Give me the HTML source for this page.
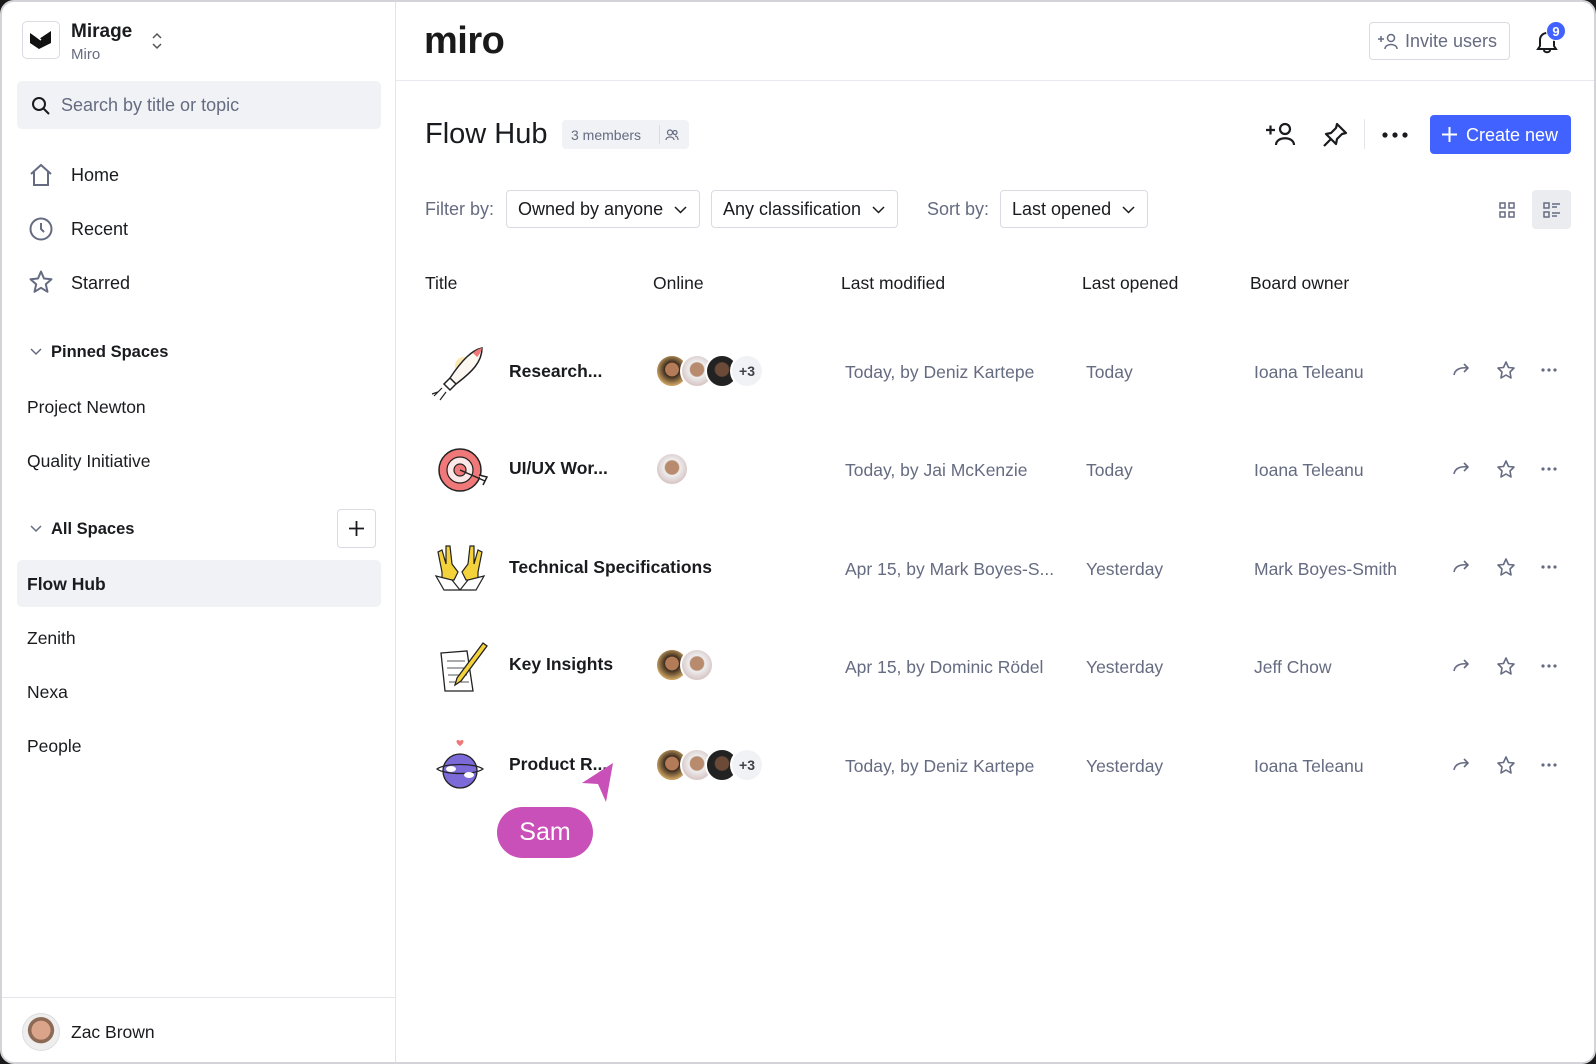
<!DOCTYPE html>
<html><head><meta charset="utf-8"><style>
*{box-sizing:border-box;margin:0;padding:0}
body{width:1596px;height:1064px;background:#1a1a1a;font-family:"Liberation Sans",sans-serif;color:#1a1b1f;overflow:hidden;position:relative}
.card{position:absolute;left:0;top:0;width:1596px;height:1064px;background:#fff;border:2px solid #d4d4d8;border-radius:14px;overflow:hidden}
.a{position:absolute;white-space:nowrap}
.side{position:absolute;left:0;top:0;width:394px;height:1064px;border-right:1.5px solid #e4e5ea}
.nav{font-size:18px;color:#1a1b1f}
.gray{color:#656b81}
.sec{font-weight:bold;font-size:16.5px}
.dd{position:absolute;top:188px;height:38px;border:1.5px solid #d9dbe3;border-radius:4px;font-size:18px;padding:8px 11px;white-space:nowrap}
.col{font-size:17.5px;top:271px}
.row .t{font-weight:bold;font-size:17.5px}
.cell{font-size:17.5px;color:#656b81}
.av{position:absolute;width:34px;height:34px;border-radius:50%;border:2px solid #fff}
.plus{background:#f1f2f5;color:#40424a;font-size:14px;text-align:center;line-height:30px;font-weight:bold}
svg{position:absolute;overflow:visible}
</style></head><body><div class="card">

<div class="side">
 <div class="a" style="left:20px;top:19px;width:38px;height:38px;border:1.5px solid #d9dbe3;border-radius:5px"></div>
 <svg style="left:27px;top:28px" width="24" height="20" viewBox="0 0 24 20"><path d="M1 3 L10 9 L10 19 L1 13Z M10 9 L22 1 L22 13 L10 19Z" fill="#111"/><path d="M4 4 L12 10" stroke="#fff" stroke-width="1.5"/></svg>
 <div class="a" style="left:69px;top:19px;font-size:19px;font-weight:bold">Mirage</div>
 <div class="a gray" style="left:69px;top:44px;font-size:15px">Miro</div>
 <svg style="left:150px;top:31px" width="10" height="16"><path d="M1 5 L5 1 L9 5 M1 11 L5 15 L9 11" stroke="#555" stroke-width="1.5" fill="none"/></svg>
 <div class="a" style="left:15px;top:79px;width:364px;height:48px;background:#f1f2f5;border-radius:5px"></div>
 <svg style="left:29px;top:94px" width="20" height="20"><circle cx="8" cy="8" r="6" stroke="#1a1b1f" stroke-width="2" fill="none"/><path d="M12.5 12.5 L18 18" stroke="#1a1b1f" stroke-width="2"/></svg>
 <div class="a gray" style="left:59px;top:93px;font-size:18px">Search by title or topic</div>

 <svg style="left:27px;top:161px" width="24" height="24"><path d="M2 11 L12 2 L22 11 M5 9 V22 H19 V9" stroke="#656b81" stroke-width="2" fill="none"/></svg>
 <div class="a nav" style="left:69px;top:163px">Home</div>
 <svg style="left:27px;top:215px" width="24" height="24"><circle cx="12" cy="12" r="10.5" stroke="#656b81" stroke-width="2" fill="none"/><path d="M12 6 V12 L15 15" stroke="#656b81" stroke-width="2" fill="none"/></svg>
 <div class="a nav" style="left:69px;top:217px">Recent</div>
 <svg style="left:27px;top:268px" width="24" height="24"><path d="M12 1.5 L15 8.5 L22.5 9.2 L16.8 14.2 L18.5 21.8 L12 17.8 L5.5 21.8 L7.2 14.2 L1.5 9.2 L9 8.5Z" stroke="#656b81" stroke-width="2" fill="none" stroke-linejoin="round"/></svg>
 <div class="a nav" style="left:69px;top:271px">Starred</div>

 <svg style="left:28px;top:346px" width="12" height="8"><path d="M1 1 L6 6 L11 1" stroke="#656b81" stroke-width="1.5" fill="none"/></svg>
 <div class="a sec" style="left:49px;top:341px">Pinned Spaces</div>
 <div class="a nav" style="left:25px;top:395px;font-size:17.5px">Project Newton</div>
 <div class="a nav" style="left:25px;top:449px;font-size:17.5px">Quality Initiative</div>
 <svg style="left:28px;top:523px" width="12" height="8"><path d="M1 1 L6 6 L11 1" stroke="#656b81" stroke-width="1.5" fill="none"/></svg>
 <div class="a sec" style="left:49px;top:518px">All Spaces</div>
 <div class="a" style="left:335px;top:507px;width:39px;height:39px;border:1.5px solid #d9dbe3;border-radius:4px"></div>
 <svg style="left:347px;top:519px" width="15" height="15"><path d="M7.5 0 V15 M0 7.5 H15" stroke="#1a1b1f" stroke-width="1.8"/></svg>
 <div class="a" style="left:15px;top:558px;width:364px;height:47px;background:#f1f2f5;border-radius:5px"></div>
 <div class="a" style="left:25px;top:572px;font-size:17.5px;font-weight:bold">Flow Hub</div>
 <div class="a nav" style="left:25px;top:626px;font-size:17.5px">Zenith</div>
 <div class="a nav" style="left:25px;top:680px;font-size:17.5px">Nexa</div>
 <div class="a nav" style="left:25px;top:734px;font-size:17.5px">People</div>
 <div class="a" style="left:0;top:995px;width:394px;border-top:1.5px solid #e4e5ea"></div>
 <div class="a" style="left:20px;top:1011px;width:38px;height:38px;border-radius:50%;background:radial-gradient(circle at 50% 45%,#d9a48a 0 35%,#8c6a55 36% 48%,#eee 50%);border:1.5px solid #ddd"></div>
 <div class="a nav" style="left:69px;top:1020px;font-size:17.5px">Zac Brown</div>
</div>

<div class="a" style="left:394px;top:78px;width:1202px;border-top:1.5px solid #e8e9ee"></div>
<div class="a" style="left:422px;top:18px;font-size:38px;font-weight:bold;letter-spacing:-0.5px;color:#1a1a1a">miro</div>
<div class="a" style="left:1367px;top:20px;width:141px;height:38px;border:1.5px solid #d9dbe3;border-radius:4px"></div>
<svg style="left:1376px;top:31px" width="20" height="16"><path d="M0 6 H6 M3 3 V9" stroke="#656b81" stroke-width="1.5"/><circle cx="13" cy="5" r="3.5" stroke="#656b81" stroke-width="1.5" fill="none"/><path d="M7 16 C7 10 19 10 19 16" stroke="#656b81" stroke-width="1.5" fill="none"/></svg>
<div class="a gray" style="left:1403px;top:29px;font-size:18px">Invite users</div>
<svg style="left:1533px;top:28px" width="24" height="24"><path d="M3 19 H21 L19 16 V10 C19 6 16 3 12 3 C8 3 5 6 5 10 V16Z M9 20 C9 23 15 23 15 20" stroke="#1a1b1f" stroke-width="2" fill="none"/></svg>
<div class="a" style="left:1544px;top:19px;width:20px;height:20px;border-radius:50%;background:#4262ff;color:#fff;font-size:13px;font-weight:bold;text-align:center;line-height:20px;border:1.5px solid #fff">9</div>

<div class="a" style="left:423px;top:116px;font-size:29px">Flow Hub</div>
<div class="a" style="left:560px;top:118px;width:127px;height:29px;background:#f1f2f5;border-radius:4px"></div>
<div class="a gray" style="left:569px;top:125px;font-size:14px">3 members</div>
<div class="a" style="left:657px;top:123px;height:19px;border-left:1px solid #d9dbe3"></div>
<svg style="left:663px;top:127px" width="14" height="12"><circle cx="5" cy="3.5" r="2.5" stroke="#656b81" stroke-width="1.2" fill="none"/><circle cx="10" cy="3.5" r="2" stroke="#656b81" stroke-width="1.2" fill="none"/><path d="M1 11 C1 7 9 7 9 11 M10 7 C12 7 13 9 13 11" stroke="#656b81" stroke-width="1.2" fill="none"/></svg>

<svg style="left:1264px;top:120px" width="30" height="24"><path d="M0 8 H9 M4.5 3.5 V12.5" stroke="#1a1b1f" stroke-width="2.2"/><circle cx="19" cy="7" r="5" stroke="#1a1b1f" stroke-width="2.2" fill="none"/><path d="M10 23 C10 14 28 14 28 23" stroke="#1a1b1f" stroke-width="2.2" fill="none"/></svg>
<svg style="left:1320px;top:120px" width="26" height="26"><path d="M15 2 L24 11 L20 12 L15 17 L14 22 L4 12 L9 11 L14 6Z M9 17 L2 24" stroke="#1a1b1f" stroke-width="2.2" fill="none" stroke-linejoin="round"/></svg>
<div class="a" style="left:1362px;top:117px;height:30px;border-left:1px solid #e4e5ea"></div>
<svg style="left:1380px;top:130px" width="26" height="6"><circle cx="3" cy="3" r="2.6" fill="#1a1b1f"/><circle cx="13" cy="3" r="2.6" fill="#1a1b1f"/><circle cx="23" cy="3" r="2.6" fill="#1a1b1f"/></svg>
<div class="a" style="left:1428px;top:113px;width:141px;height:39px;background:#4262ff;border-radius:4px"></div>
<svg style="left:1440px;top:125px" width="15" height="15"><path d="M7.5 0 V15 M0 7.5 H15" stroke="#fff" stroke-width="2"/></svg>
<div class="a" style="left:1464px;top:123px;font-size:18px;color:#fff">Create new</div>

<div class="a gray" style="left:423px;top:197px;font-size:18px">Filter by:</div>
<div class="dd" style="left:504px;width:194px">Owned by anyone</div>
<svg style="left:672px;top:204px" width="13" height="8"><path d="M1 1 L6.5 6.5 L12 1" stroke="#1a1b1f" stroke-width="1.5" fill="none"/></svg>
<div class="dd" style="left:709px;width:187px">Any classification</div>
<svg style="left:870px;top:204px" width="13" height="8"><path d="M1 1 L6.5 6.5 L12 1" stroke="#1a1b1f" stroke-width="1.5" fill="none"/></svg>
<div class="a gray" style="left:925px;top:197px;font-size:18px">Sort by:</div>
<div class="dd" style="left:998px;width:148px">Last opened</div>
<svg style="left:1120px;top:204px" width="13" height="8"><path d="M1 1 L6.5 6.5 L12 1" stroke="#1a1b1f" stroke-width="1.5" fill="none"/></svg>
<svg style="left:1497px;top:200px" width="16" height="16"><g stroke="#656b81" stroke-width="1.5" fill="none"><rect x="1" y="1" width="5" height="5"/><rect x="10" y="1" width="5" height="5"/><rect x="1" y="10" width="5" height="5"/><rect x="10" y="10" width="5" height="5"/></g></svg>
<div class="a" style="left:1530px;top:188px;width:39px;height:39px;background:#ebecf0;border-radius:4px"></div>
<svg style="left:1541px;top:200px" width="18" height="16"><g stroke="#656b81" stroke-width="1.5" fill="none"><rect x="1" y="1" width="5" height="5"/><rect x="1" y="10" width="5" height="5"/><path d="M9 2 H17 M9 5 H14 M9 11 H17 M9 14 H14"/></g></svg>

<div class="a col" style="left:423px">Title</div>
<div class="a col" style="left:651px">Online</div>
<div class="a col" style="left:839px">Last modified</div>
<div class="a col" style="left:1080px">Last opened</div>
<div class="a col" style="left:1248px">Board owner</div>

<div class="row">
 <svg style="left:430px;top:344px" width="54" height="56"><circle cx="32" cy="20" r="9" fill="#fbe7b0"/><path d="M50 2 C40 4 30 14 18 32 L24 38 C40 26 50 16 50 2Z" fill="#fdf7f2" stroke="#222" stroke-width="1.5"/><path d="M50 2 C46 3 43 5 41 7 L45 11 C47 9 49 6 50 2Z" fill="#f07878"/><path d="M18 32 L12 38 L18 44 L24 38" fill="none" stroke="#222" stroke-width="1.5"/><path d="M10 42 L2 50 M14 46 L8 54 M6 46 L0 48" stroke="#222" stroke-width="1.2"/></svg>
 <div class="a t" style="left:507px;top:359px">Research...</div>
 <div class="av" style="left:653px;top:352px;background:radial-gradient(circle at 50% 45%,#b47b58 0 30%,#3a2a1e 32%,#c9a060 70%)"></div>
 <div class="av" style="left:678px;top:352px;background:radial-gradient(circle at 50% 45%,#b88a6e 0 30%,#eee 35%,#d9c8c8 70%)"></div>
 <div class="av" style="left:703px;top:352px;background:radial-gradient(circle at 50% 45%,#6b4a38 0 30%,#222 35%)"></div>
 <div class="av plus" style="left:728px;top:352px">+3</div>
 <div class="a cell" style="left:843px;top:360px">Today, by Deniz Kartepe</div>
 <div class="a cell" style="left:1084px;top:360px">Today</div>
 <div class="a cell" style="left:1252px;top:360px">Ioana Teleanu</div>
</div>
<div class="row">
 <svg style="left:435px;top:445px" width="54" height="46"><circle cx="23" cy="23" r="21" fill="#f07878" stroke="#222" stroke-width="1.5"/><circle cx="23" cy="23" r="13" fill="#fde8e8" stroke="#222" stroke-width="1.2"/><circle cx="23" cy="23" r="6" fill="#f07878" stroke="#222" stroke-width="1.2"/><path d="M23 23 L48 34 M42 28 L50 30 L46 38" stroke="#222" stroke-width="1.5" fill="#fff"/></svg>
 <div class="a t" style="left:507px;top:456px">UI/UX Wor...</div>
 <div class="av" style="left:653px;top:450px;background:radial-gradient(circle at 50% 45%,#b88a6e 0 30%,#eee 35%,#d9c8c8 70%)"></div>
 <div class="a cell" style="left:843px;top:458px">Today, by Jai McKenzie</div>
 <div class="a cell" style="left:1084px;top:458px">Today</div>
 <div class="a cell" style="left:1252px;top:458px">Ioana Teleanu</div>
</div>
<div class="row">
 <svg style="left:432px;top:542px" width="52" height="48"><path d="M8 28 L4 8 L8 6 L12 20 L12 2 L16 2 L18 20 L24 28 L20 36 L8 36Z" fill="#f4d23c" stroke="#222" stroke-width="1.2"/><path d="M44 28 L48 8 L44 6 L40 20 L40 2 L36 2 L34 20 L28 28 L32 36 L44 36Z" fill="#f4d23c" stroke="#222" stroke-width="1.2"/><path d="M2 32 L18 36 L26 46 L10 46Z M50 32 L34 36 L26 46 L42 46Z" fill="#fff" stroke="#222" stroke-width="1.2"/></svg>
 <div class="a t" style="left:507px;top:555px">Technical Specifications</div>
 <div class="a cell" style="left:843px;top:557px">Apr 15, by Mark Boyes-S...</div>
 <div class="a cell" style="left:1084px;top:557px">Yesterday</div>
 <div class="a cell" style="left:1252px;top:557px">Mark Boyes-Smith</div>
</div>
<div class="row">
 <svg style="left:437px;top:639px" width="50" height="52"><path d="M2 12 L28 10 L34 50 L6 50Z" fill="#fff" stroke="#222" stroke-width="1.3"/><path d="M8 20 H26 M8 27 H28 M9 34 H28 M10 41 H30" stroke="#555" stroke-width="1"/><path d="M44 2 L48 5 L22 40 L16 44 L18 37Z" fill="#f4d23c" stroke="#222" stroke-width="1.3"/></svg>
 <div class="a t" style="left:507px;top:652px">Key Insights</div>
 <div class="av" style="left:653px;top:646px;background:radial-gradient(circle at 50% 45%,#b47b58 0 30%,#3a2a1e 32%,#c9a060 70%)"></div>
 <div class="av" style="left:678px;top:646px;background:radial-gradient(circle at 50% 45%,#b88a6e 0 30%,#eee 35%,#d9c8c8 70%)"></div>
 <div class="a cell" style="left:843px;top:655px">Apr 15, by Dominic Rödel</div>
 <div class="a cell" style="left:1084px;top:655px">Yesterday</div>
 <div class="a cell" style="left:1252px;top:655px">Jeff Chow</div>
</div>
<div class="row">
 <svg style="left:433px;top:737px" width="50" height="52"><path d="M25 2 C22 -1 19 3 25 7 C31 3 28 -1 25 2Z" fill="#f07878"/><circle cx="25" cy="32" r="17" fill="#7b6ad8" stroke="#222" stroke-width="1.3"/><path d="M2 30 C10 24 40 24 48 30 C40 36 10 36 2 30Z" fill="none" stroke="#222" stroke-width="1.2"/><ellipse cx="16" cy="30" rx="5" ry="3" fill="#fff"/><ellipse cx="34" cy="36" rx="5" ry="3" fill="#fff"/></svg>
 <div class="a t" style="left:507px;top:752px">Product R...</div>
 <div class="av" style="left:653px;top:746px;background:radial-gradient(circle at 50% 45%,#b47b58 0 30%,#3a2a1e 32%,#c9a060 70%)"></div>
 <div class="av" style="left:678px;top:746px;background:radial-gradient(circle at 50% 45%,#b88a6e 0 30%,#eee 35%,#d9c8c8 70%)"></div>
 <div class="av" style="left:703px;top:746px;background:radial-gradient(circle at 50% 45%,#6b4a38 0 30%,#222 35%)"></div>
 <div class="av plus" style="left:728px;top:746px">+3</div>
 <div class="a cell" style="left:843px;top:754px">Today, by Deniz Kartepe</div>
 <div class="a cell" style="left:1084px;top:754px">Yesterday</div>
 <div class="a cell" style="left:1252px;top:754px">Ioana Teleanu</div>
</div>

<svg style="left:1451px;top:0" width="130" height="800">
 <defs><g id="ac" stroke="#656b81" stroke-width="1.6" fill="none" stroke-linejoin="round"><path d="M1 11 C2 5 8 3 15 4 M11 0 L15 4 L11 8"/><path d="M53 -2 L55.5 3.5 L61 4 L57 8 L58 14 L53 11 L48 14 L49 8 L45 4 L50.5 3.5Z"/><g fill="#656b81" stroke="none"><circle cx="90" cy="6" r="1.6"/><circle cx="96" cy="6" r="1.6"/><circle cx="102" cy="6" r="1.6"/></g></g></defs>
 <use href="#ac" y="362"/><use href="#ac" y="461"/><use href="#ac" y="559"/><use href="#ac" y="658"/><use href="#ac" y="757"/>
</svg>

<svg style="left:580px;top:761px" width="32" height="40"><path d="M31 0 L0 20 L16 21 L24 39Z" fill="#c850b8"/></svg>
<div class="a" style="left:495px;top:805px;width:96px;height:51px;border-radius:26px;background:#c850b8;color:#fff;font-size:25px;text-align:center;line-height:51px">Sam</div>

</div></body></html>
